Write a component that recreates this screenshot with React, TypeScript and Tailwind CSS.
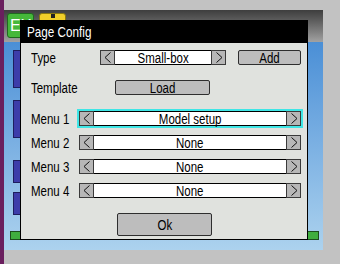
import React from 'react';

const font = { fontFamily: '"Liberation Sans", Arial, sans-serif' };

// narrow text: the device font is a condensed face, so squeeze Liberation Sans
const Txt = ({ children, left = false }: { children: React.ReactNode; left?: boolean }) => (
  <span className={`inline-block whitespace-nowrap scale-x-[0.82] ${left ? 'origin-left' : 'origin-center'}`}>{children}</span>
);

const Arrow = ({ dir }: { dir: 'left' | 'right' }) => (
  <div className="flex h-full w-[15px] shrink-0 items-center justify-center border border-[#3a3a3a] bg-[#b7b7b7]">
    <svg width="8" height="11" viewBox="0 0 8 11">
      {dir === 'left' ? (
        <polyline points="6.5,0.5 1,5.5 6.5,10.5" fill="none" stroke="#111" strokeWidth="1" />
      ) : (
        <polyline points="1.5,0.5 7,5.5 1.5,10.5" fill="none" stroke="#111" strokeWidth="1" />
      )}
    </svg>
  </div>
);

const Choice = ({ value, focused = false, className = '' }: { value: string; focused?: boolean; className?: string }) => (
  <div className={`flex h-[15px] items-stretch ${focused ? 'outline-2 outline-[#3fe6e6]' : ''} ${className}`}>
    <Arrow dir="left" />
    <div className="flex flex-1 items-center justify-center border-y border-black bg-white text-[14px] leading-none text-black">
      <Txt>{value}</Txt>
    </div>
    <Arrow dir="right" />
  </div>
);

const Button = ({ label, className = '' }: { label: string; className?: string }) => (
  <div className={`flex items-center justify-center rounded-[2px] border border-[#2e2e2e] bg-[#bdbdbd] text-[14px] leading-none text-black ${className}`}>
    <Txt>{label}</Txt>
  </div>
);

const Label = ({ text }: { text: string }) => (
  <div className="w-[48px] shrink-0 text-[14px] leading-none text-black">
    <Txt left>{text}</Txt>
  </div>
);

const App = () => {
  const menus = ['Model setup', 'None', 'None', 'None'];

  return (
    <div className="flex h-[264px] w-[340px] overflow-hidden bg-[#c2c2c2]" style={font}>
      {/* purple strip */}
      <div className="w-[4px] shrink-0 bg-[#6a1f5e]" />

      <div className="flex flex-1 flex-col pt-[10px] pb-[14px] pr-[17px]">
        {/* simulated screen */}
        <div className="relative flex flex-1 flex-col">
          <div className="flex h-[32px] gap-[5px] bg-gradient-to-b from-[#3e3e3e] to-[#a2a2a2] px-[3px] pt-[3px]">
            <div className="flex h-[25px] w-[27px] items-center rounded-[3px] border border-[#1f6a1f] bg-[#45b83a] pl-[2px] text-[16px] text-white">
              EX
            </div>
            <div className="flex h-[25px] w-[27px] justify-center rounded-[3px] border border-[#8a7a10] bg-[#f0cf2a]">
              <div className="h-[4px] w-[4px] bg-[#222]" />
            </div>
          </div>
          <div className="flex flex-1 flex-col justify-between bg-gradient-to-b from-[#4a8fd6] to-[#acd2ee] pl-[6px] pt-[8px] pb-[10px]">
            <div className="flex flex-col gap-[12px] pl-[3px]">
              <div className="h-[38px] w-[8px] border border-[#1e1e5e] bg-[#3d3daa]" />
              <div className="h-[38px] w-[8px] border border-[#1e1e5e] bg-[#3d3daa]" />
              <div className="mt-[10px] h-[23px] w-[8px] border border-[#1e1e5e] bg-[#3d3daa]" />
              <div className="-mt-[3px] h-[23px] w-[8px] border border-[#1e1e5e] bg-[#3d3daa]" />
            </div>
            <div className="flex justify-between pr-[4px]">
              <div className="h-[9px] w-[11px] border border-[#1d4d1d] bg-[#3fae3f]" />
              <div className="h-[9px] w-[12px] border border-[#1d4d1d] bg-[#3fae3f]" />
            </div>
          </div>

          {/* dialog */}
          <div className="absolute left-[16px] top-[10px] flex h-[220px] w-[288px] flex-col">
            <div className="flex h-[23px] items-center bg-black pl-[7px] text-[15px] leading-none text-white">
              <span className="inline-block origin-left scale-x-[0.78] whitespace-nowrap">Page Config</span>
            </div>
            <div className="flex flex-1 flex-col border-x border-b border-black bg-[#e0e2de] pl-[10px] pt-[7px]">
              <div className="flex h-[15px] items-center">
                <Label text="Type" />
                <Choice value="Small-box" className="ml-[21px] w-[126px]" />
                <Button label="Add" className="ml-[12px] h-[15px] w-[63px]" />
              </div>
              <div className="mt-[15px] flex h-[15px] items-center">
                <Label text="Template" />
                <Button label="Load" className="ml-[36px] h-[15px] w-[95px]" />
              </div>
              <div className="mt-[16px] flex flex-col gap-[9px]">
                {menus.map((m, i) => (
                  <div key={i} className="flex h-[15px] items-center">
                    <Label text={`Menu ${i + 1}`} />
                    <Choice value={m} focused={i === 0} className="w-[222px]" />
                  </div>
                ))}
              </div>
              <div className="mt-[15px] flex pl-[86px]">
                <Button label="Ok" className="h-[23px] w-[95px]" />
              </div>
            </div>
          </div>
        </div>
      </div>
    </div>
  );
};

export default App;
